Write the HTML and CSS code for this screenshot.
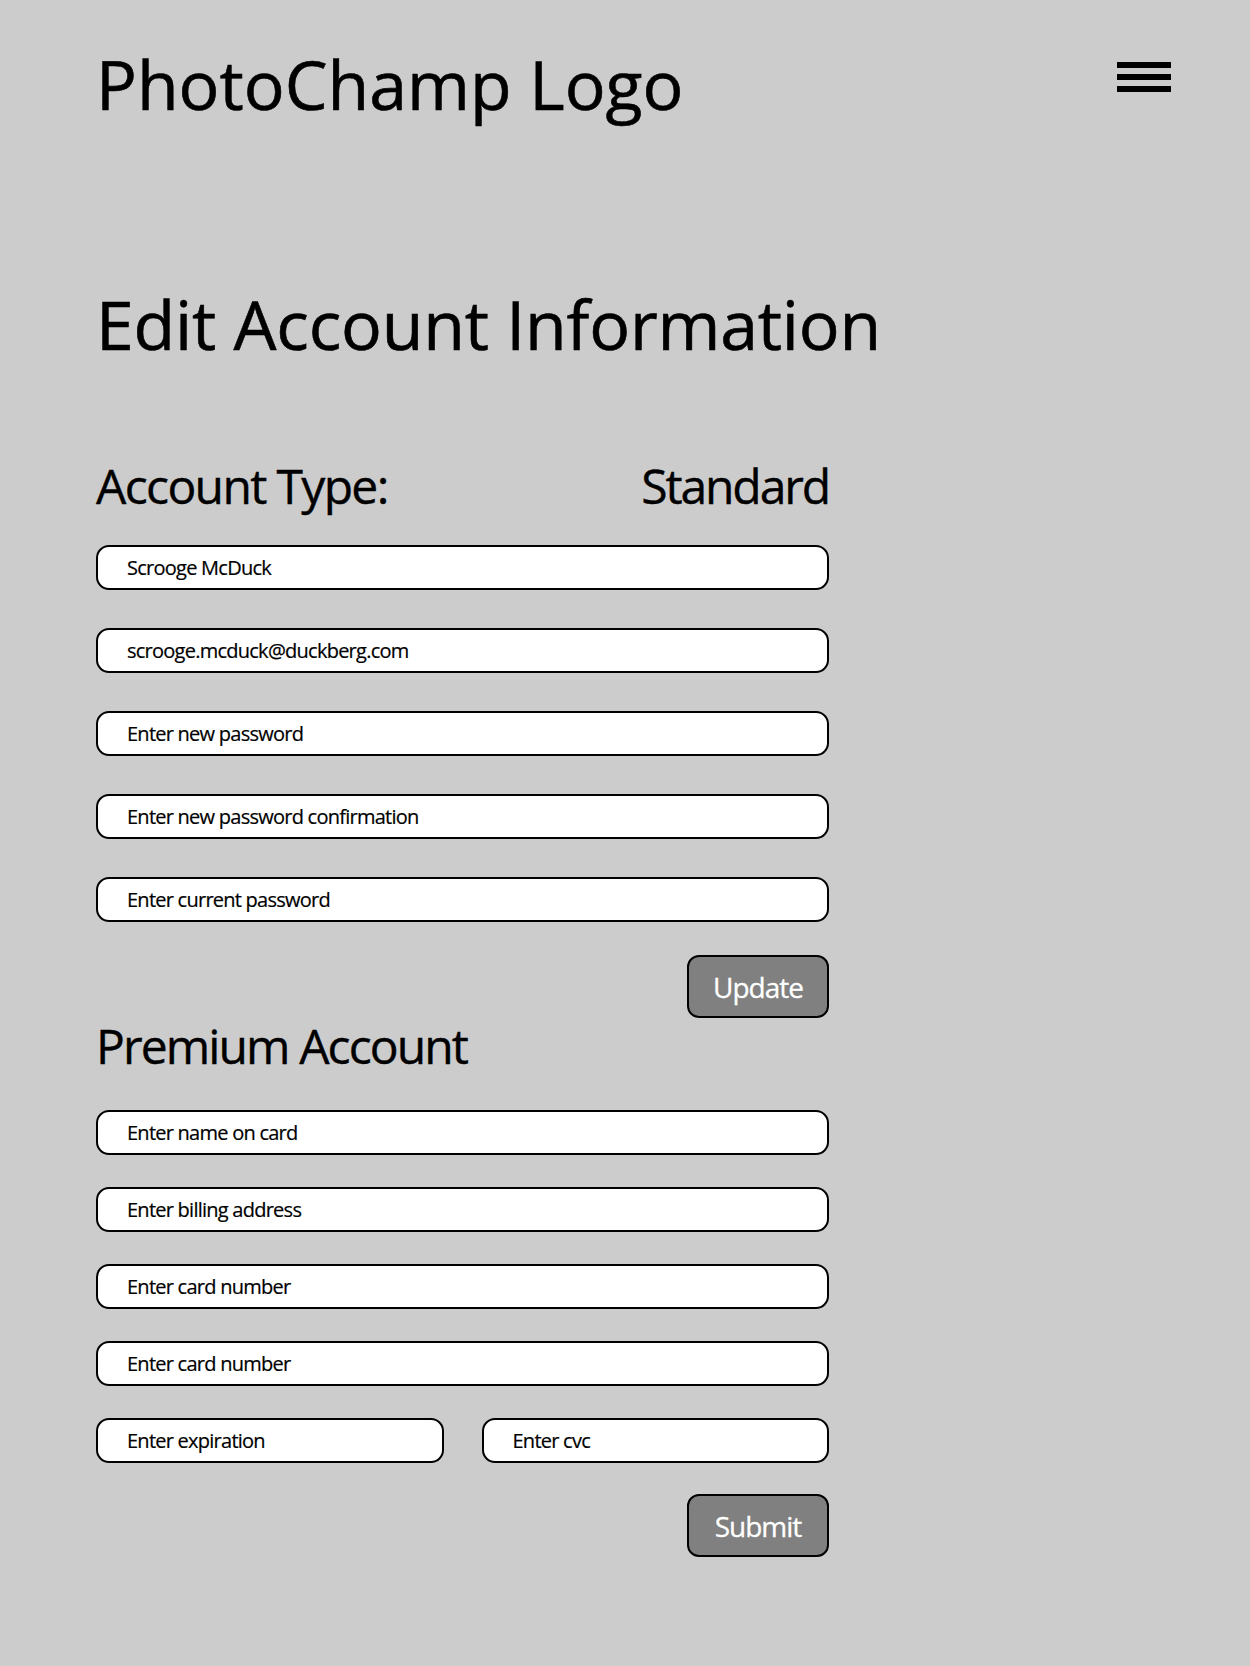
FILE: index.html
```html
<!DOCTYPE html>
<html lang="en">
<head>
<meta charset="utf-8">
<title>PhotoChamp - Edit Account Information</title>
<link rel="stylesheet" href="styles.css">
</head>
<body>
<header class="topbar">
  <div class="logo">PhotoChamp Logo</div>
  <button class="menu" type="button" aria-label="Menu"><span></span><span></span><span></span></button>
</header>
<main class="content">
  <h1 class="title">Edit Account Information</h1>

  <form class="form account-form">
    <div class="type-row">
      <h2 class="section-title type-label">Account Type:</h2>
      <span class="type-value">Standard</span>
    </div>
    <div class="fields">
      <input class="field" type="text" value="Scrooge McDuck">
      <input class="field" type="email" value="scrooge.mcduck@duckberg.com">
      <input class="field" type="password" placeholder="Enter new password">
      <input class="field" type="password" placeholder="Enter new password confirmation">
      <input class="field" type="password" placeholder="Enter current password">
    </div>
    <div class="actions"><button class="btn" type="button">Update</button></div>
  </form>

  <form class="form premium-form">
    <h2 class="section-title">Premium Account</h2>
    <div class="fields tight">
      <input class="field" type="text" placeholder="Enter name on card">
      <input class="field" type="text" placeholder="Enter billing address">
      <input class="field" type="text" placeholder="Enter card number">
      <input class="field" type="text" placeholder="Enter card number">
      <div class="pair">
        <input class="field" type="text" placeholder="Enter expiration">
        <input class="field" type="text" placeholder="Enter cvc">
      </div>
    </div>
    <div class="actions submit-row"><button class="btn" type="button">Submit</button></div>
  </form>
</main>
</body>
</html>
```
FILE: styles.css
```css
* { box-sizing: border-box; }

html, body {
  margin: 0;
  padding: 0;
  background: #cccccc;
  color: #000;
  font-family: "Open Sans", "Noto Sans", sans-serif;
}

.topbar {
  display: flex;
  justify-content: space-between;
  align-items: flex-start;
  padding: 44px 79px 0 96px;
}

.logo {
  font-size: 68px;
  line-height: 80px;
  letter-spacing: 0;
  font-weight: 400;
  -webkit-text-stroke: 0.6px #000;
}

.menu {
  margin-top: 18px;
  width: 54px;
  padding: 0;
  border: 0;
  background: transparent;
  display: flex;
  flex-direction: column;
  gap: 6px;
  cursor: pointer;
}

.menu span {
  display: block;
  height: 6px;
  background: #000;
}

.content {
  padding: 0 0 60px 96px;
}

.title {
  margin: 160px 0 0;
  font-size: 68px;
  line-height: 80px;
  letter-spacing: -0.2px;
  font-weight: 400;
  -webkit-text-stroke: 0.6px #000;
}

.form {
  width: 733px;
  display: flex;
  flex-direction: column;
}

.account-form { margin-top: 94px; }

.type-row {
  display: flex;
  justify-content: space-between;
  align-items: baseline;
}

.section-title,
.type-value {
  margin: 0;
  font-size: 48px;
  line-height: 56px;
  letter-spacing: -1.9px;
  font-weight: 400;
  -webkit-text-stroke: 0.4px #000;
}

.type-label { letter-spacing: -1.65px; }
.type-value { letter-spacing: -2.1px; }

.fields {
  margin-top: 31px;
  display: flex;
  flex-direction: column;
  gap: 38px;
}

.fields.tight {
  margin-top: 36px;
  gap: 32px;
}

.field {
  display: block;
  width: 100%;
  height: 45px;
  margin: 0;
  padding: 0 12px 0 29px;
  border: 2px solid #000;
  border-radius: 13px;
  background: #fff;
  color: #000;
  font-family: "Open Sans", "Noto Sans", sans-serif;
  font-size: 20px;
  font-weight: 400;
  letter-spacing: -0.75px;
  -webkit-text-stroke: 0.2px #000;
  outline: none;
}

.field::placeholder {
  color: #000;
  opacity: 1;
}

.pair {
  display: grid;
  grid-template-columns: 1fr 1fr;
  gap: 38px;
}

.actions {
  margin-top: 33px;
  display: flex;
  justify-content: flex-end;
}

.submit-row { margin-top: 31px; }

.btn {
  width: 142px;
  height: 63px;
  padding: 0;
  border: 2px solid #000;
  border-radius: 12px;
  background: #808080;
  color: #fff;
  font-family: "Open Sans", "Noto Sans", sans-serif;
  font-size: 28px;
  font-weight: 400;
  letter-spacing: -1px;
  -webkit-text-stroke: 0.3px #fff;
  cursor: pointer;
}
```
